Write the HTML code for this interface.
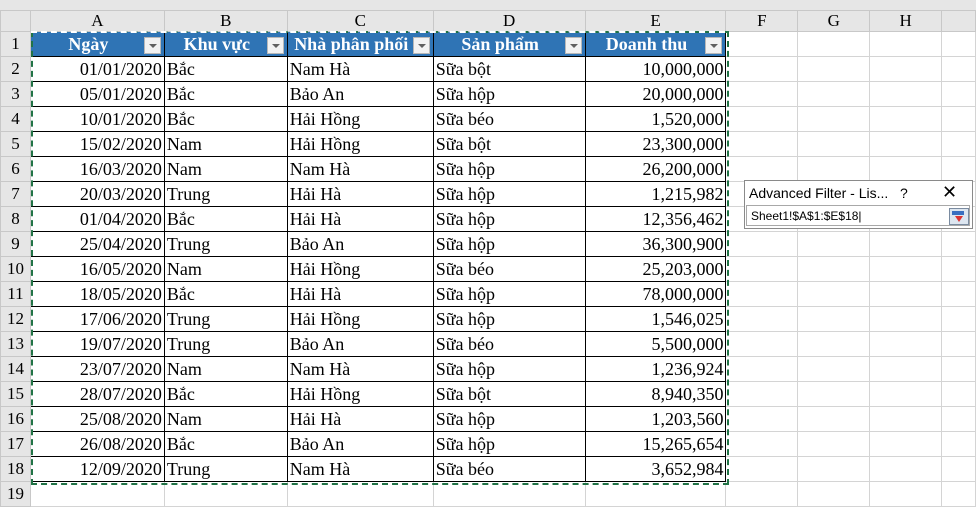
<!DOCTYPE html>
<html><head><meta charset="utf-8"><style>
body{margin:0;width:976px;height:484px;overflow:hidden;background:#fff;position:relative;font-family:"Liberation Serif",serif;}
.top{position:absolute;left:0;top:0;width:976px;height:10px;background:#e6e6e6}
table{position:absolute;left:0;top:10px;border-collapse:collapse;table-layout:fixed}
td{height:24px;border:1px solid #d4d4d4;padding:0 2px;font-size:18px;color:#000;white-space:nowrap;overflow:hidden;line-height:24px}
tr.ch td{height:20px;background:#e6e6e6;border-color:#c8c8c8;text-align:center;font-size:17px;line-height:20px}
td.rh{background:#e6e6e6;border-color:#c8c8c8;text-align:center;font-size:17px;padding:0}
td.d{border-color:#000}
td.r{text-align:right}
td.h{background:#2f74b5;color:#fff;font-weight:bold;border-color:#000;position:relative;text-align:center;padding-right:20px}
td.h i{position:absolute;right:3px;top:5px;width:15px;height:15px;background:#f2f2f2;border:1px solid #b8b8b8}
td.h i:after{content:"";position:absolute;left:4px;top:6px;border-left:4px solid transparent;border-right:4px solid transparent;border-top:4px solid #606060}
.ant{position:absolute;left:31px;top:31px;width:694px;height:450px;border:2px dashed #217346;pointer-events:none}
.antt{position:absolute;left:31px;top:31px;width:694px;height:0;border-top:2px dashed #fff}
.dlg{position:absolute;left:744px;top:180px;width:227px;height:47px;border:1px solid #8a8a8a;background:#fff;font-family:"Liberation Sans",sans-serif}
.dlg .t{position:absolute;left:4px;top:4px;font-size:14px;color:#000}
.dlg .q{position:absolute;left:155px;top:4px;font-size:14px}
.dlg .x{position:absolute;left:197px;top:1px;font-size:18px}
.dlg .in{position:absolute;left:1px;top:24px;height:21px;border:1px solid #a8a8a8;font-size:12px;line-height:20px;padding-left:4px;box-sizing:border-box;width:224px}
.btn{position:absolute;right:3px;top:27px;width:18px;height:15px;background:#dde6f0;border:1px solid #7a8ba0}
.btn:before{content:"";position:absolute;left:2px;top:2px;width:12px;height:4px;background:#3a6fc0}
.btn:after{content:"";position:absolute;left:5px;top:7px;border-left:4px solid transparent;border-right:4px solid transparent;border-top:6px solid #d33}
</style></head><body>
<div class="top"></div>
<table>
<colgroup><col style="width:30px"><col style="width:134px"><col style="width:123px"><col style="width:146px"><col style="width:152px"><col style="width:141px"><col style="width:72px"><col style="width:72px"><col style="width:72px"><col style="width:34px"></colgroup>
<tr class="ch"><td></td><td>A</td><td>B</td><td>C</td><td>D</td><td>E</td><td>F</td><td>G</td><td>H</td><td></td></tr>
<tr><td class="rh">1</td><td class="h">Ngày<i></i></td><td class="h">Khu vực<i></i></td><td class="h">Nhà phân phối<i></i></td><td class="h">Sản phẩm<i></i></td><td class="h">Doanh thu<i></i></td><td></td><td></td><td></td><td></td></tr>
<tr><td class="rh">2</td><td class="d r">01/01/2020</td><td class="d">Bắc</td><td class="d">Nam Hà</td><td class="d">Sữa bột</td><td class="d r">10,000,000</td><td></td><td></td><td></td><td></td></tr>
<tr><td class="rh">3</td><td class="d r">05/01/2020</td><td class="d">Bắc</td><td class="d">Bảo An</td><td class="d">Sữa hộp</td><td class="d r">20,000,000</td><td></td><td></td><td></td><td></td></tr>
<tr><td class="rh">4</td><td class="d r">10/01/2020</td><td class="d">Bắc</td><td class="d">Hải Hồng</td><td class="d">Sữa béo</td><td class="d r">1,520,000</td><td></td><td></td><td></td><td></td></tr>
<tr><td class="rh">5</td><td class="d r">15/02/2020</td><td class="d">Nam</td><td class="d">Hải Hồng</td><td class="d">Sữa bột</td><td class="d r">23,300,000</td><td></td><td></td><td></td><td></td></tr>
<tr><td class="rh">6</td><td class="d r">16/03/2020</td><td class="d">Nam</td><td class="d">Nam Hà</td><td class="d">Sữa hộp</td><td class="d r">26,200,000</td><td></td><td></td><td></td><td></td></tr>
<tr><td class="rh">7</td><td class="d r">20/03/2020</td><td class="d">Trung</td><td class="d">Hải Hà</td><td class="d">Sữa hộp</td><td class="d r">1,215,982</td><td></td><td></td><td></td><td></td></tr>
<tr><td class="rh">8</td><td class="d r">01/04/2020</td><td class="d">Bắc</td><td class="d">Hải Hà</td><td class="d">Sữa hộp</td><td class="d r">12,356,462</td><td></td><td></td><td></td><td></td></tr>
<tr><td class="rh">9</td><td class="d r">25/04/2020</td><td class="d">Trung</td><td class="d">Bảo An</td><td class="d">Sữa hộp</td><td class="d r">36,300,900</td><td></td><td></td><td></td><td></td></tr>
<tr><td class="rh">10</td><td class="d r">16/05/2020</td><td class="d">Nam</td><td class="d">Hải Hồng</td><td class="d">Sữa béo</td><td class="d r">25,203,000</td><td></td><td></td><td></td><td></td></tr>
<tr><td class="rh">11</td><td class="d r">18/05/2020</td><td class="d">Bắc</td><td class="d">Hải Hà</td><td class="d">Sữa hộp</td><td class="d r">78,000,000</td><td></td><td></td><td></td><td></td></tr>
<tr><td class="rh">12</td><td class="d r">17/06/2020</td><td class="d">Trung</td><td class="d">Hải Hồng</td><td class="d">Sữa hộp</td><td class="d r">1,546,025</td><td></td><td></td><td></td><td></td></tr>
<tr><td class="rh">13</td><td class="d r">19/07/2020</td><td class="d">Trung</td><td class="d">Bảo An</td><td class="d">Sữa béo</td><td class="d r">5,500,000</td><td></td><td></td><td></td><td></td></tr>
<tr><td class="rh">14</td><td class="d r">23/07/2020</td><td class="d">Nam</td><td class="d">Nam Hà</td><td class="d">Sữa hộp</td><td class="d r">1,236,924</td><td></td><td></td><td></td><td></td></tr>
<tr><td class="rh">15</td><td class="d r">28/07/2020</td><td class="d">Bắc</td><td class="d">Hải Hồng</td><td class="d">Sữa bột</td><td class="d r">8,940,350</td><td></td><td></td><td></td><td></td></tr>
<tr><td class="rh">16</td><td class="d r">25/08/2020</td><td class="d">Nam</td><td class="d">Hải Hà</td><td class="d">Sữa hộp</td><td class="d r">1,203,560</td><td></td><td></td><td></td><td></td></tr>
<tr><td class="rh">17</td><td class="d r">26/08/2020</td><td class="d">Bắc</td><td class="d">Bảo An</td><td class="d">Sữa hộp</td><td class="d r">15,265,654</td><td></td><td></td><td></td><td></td></tr>
<tr><td class="rh">18</td><td class="d r">12/09/2020</td><td class="d">Trung</td><td class="d">Nam Hà</td><td class="d">Sữa béo</td><td class="d r">3,652,984</td><td></td><td></td><td></td><td></td></tr>
<tr><td class="rh">19</td><td></td><td></td><td></td><td></td><td></td><td></td><td></td><td></td><td></td></tr>
</table>
<div class="ant"></div>
<div class="antt"></div>
<div class="dlg"><div class="t">Advanced Filter - Lis...</div><div class="q">?</div><div class="x">✕</div><div class="in">Sheet1!$A$1:$E$18|</div><div class="btn"></div></div>
</body></html>
